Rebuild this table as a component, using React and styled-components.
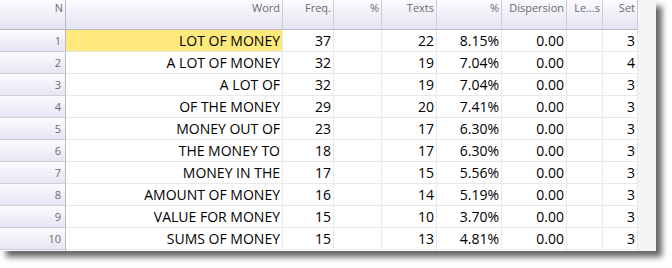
import React from "react";
import styled, { createGlobalStyle } from "styled-components";

const GlobalStyle = createGlobalStyle`
  html, body {
    margin: 0;
    padding: 0;
    background: #ffffff;
  }
  body {
    font-family: "Open Sans", "Noto Sans", sans-serif;
  }
`;

const COLUMNS = "66px 217px 51px 48px 55px 65px 65px 36px 35px 18px";

const Page = styled.div`
  padding: 0;
  width: 672px;
  height: 268px;
`;

const Panel = styled.div`
  width: 656px;
  height: 251px;
  overflow: hidden;
  background: #f5f5f5;
  box-shadow: 6px 6px 6px rgba(0, 0, 0, 0.6);
`;

const Grid = styled.div`
  display: grid;
  grid-template-columns: ${COLUMNS};
  grid-auto-rows: 22px;
  grid-template-rows: 30px;
`;

const HeadCell = styled.div`
  box-sizing: border-box;
  background: linear-gradient(#fbfbfe, #e4e4f3);
  border-right: 1px solid ${(p) => (p.$first ? "#b9b9c9" : "#cdcdda")};
  border-bottom: 1px solid #b9b9c9;
  color: #6b6b6b;
  font-size: 11px;
  line-height: 14px;
  padding: 1px 2px 0 0;
  text-align: right;
  white-space: nowrap;
  overflow: hidden;
`;

const Filler = styled.div`
  background: #f5f5f5;
`;

const NumCell = styled.div`
  box-sizing: border-box;
  background: linear-gradient(#fbfbfe, #e6e6f4);
  border-right: 1px solid #b9b9c9;
  border-bottom: 1px solid #cfcfdb;
  color: #6b6b6b;
  font-size: 11px;
  padding-right: 4px;
  display: flex;
  align-items: center;
  justify-content: flex-end;
`;

const Cell = styled.div`
  box-sizing: border-box;
  background: ${(p) => (p.$hl ? "#fde97c" : "#ffffff")};
  border-right: 1px solid #e9e9e9;
  border-bottom: 1px solid #e9e9e9;
  color: #000000;
  font-size: 14px;
  padding-right: 2px;
  display: flex;
  align-items: center;
  justify-content: flex-end;
  white-space: nowrap;
`;

const headers = ["N", "Word", "Freq.", "%", "Texts", "%", "Dispersion", "Le...s", "Set"];

const rows = [
  ["LOT OF MONEY", "37", "", "22", "8.15%", "0.00", "", "3"],
  ["A LOT OF MONEY", "32", "", "19", "7.04%", "0.00", "", "4"],
  ["A LOT OF", "32", "", "19", "7.04%", "0.00", "", "3"],
  ["OF THE MONEY", "29", "", "20", "7.41%", "0.00", "", "3"],
  ["MONEY OUT OF", "23", "", "17", "6.30%", "0.00", "", "3"],
  ["THE MONEY TO", "18", "", "17", "6.30%", "0.00", "", "3"],
  ["MONEY IN THE", "17", "", "15", "5.56%", "0.00", "", "3"],
  ["AMOUNT OF MONEY", "16", "", "14", "5.19%", "0.00", "", "3"],
  ["VALUE FOR MONEY", "15", "", "10", "3.70%", "0.00", "", "3"],
  ["SUMS OF MONEY", "15", "", "13", "4.81%", "0.00", "", "3"],
  ["", "", "", "", "", "", "", ""],
];

const App = () => {
  return (
    <>
      <GlobalStyle />
      <Page>
        <Panel>
          <Grid>
            {headers.map((h, i) => (
              <HeadCell key={"h" + i} $first={i === 0}>
                {h}
              </HeadCell>
            ))}
            <Filler />
            {rows.map((r, ri) => (
              <React.Fragment key={ri}>
                <NumCell>{r[0] ? ri + 1 : ""}</NumCell>
                {r.map((v, ci) => (
                  <Cell key={ci} $hl={ri === 0 && ci === 0}>
                    {v}
                  </Cell>
                ))}
                <Filler />
              </React.Fragment>
            ))}
          </Grid>
        </Panel>
      </Page>
    </>
  );
};

export default App;
